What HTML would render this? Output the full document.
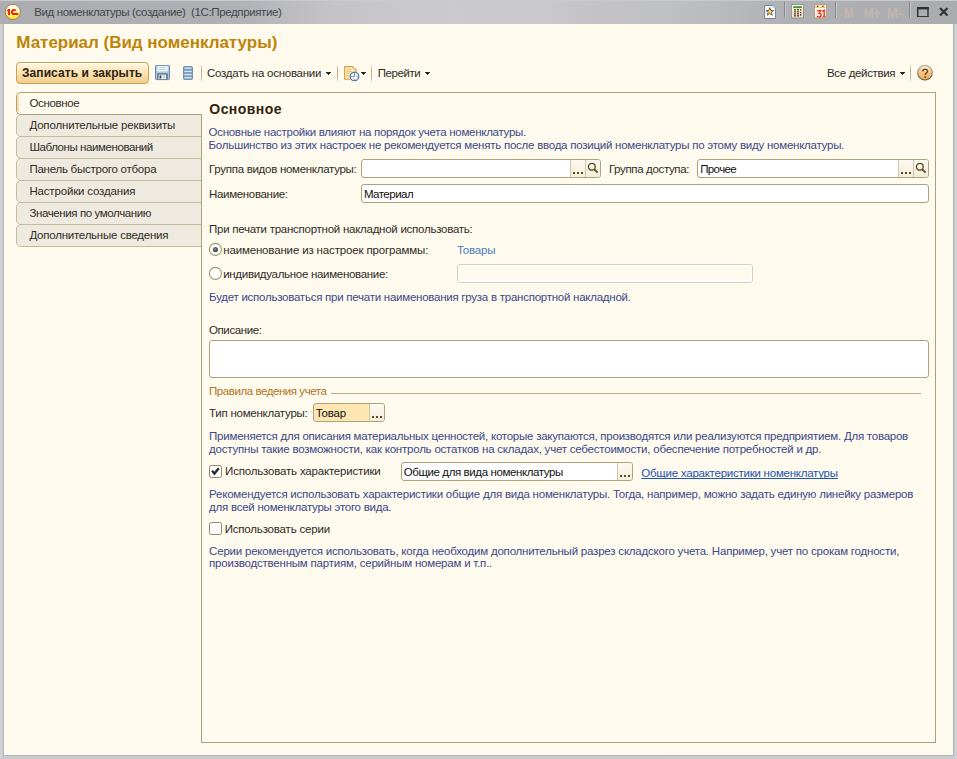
<!DOCTYPE html>
<html><head><meta charset="utf-8">
<style>
html,body{margin:0;padding:0;}
body{width:957px;height:759px;position:relative;overflow:hidden;background:#c9cbcf;font-family:"Liberation Sans",sans-serif;}
.a{position:absolute;box-sizing:border-box;}
.t{position:absolute;white-space:pre;font-family:"Liberation Sans",sans-serif;}
.sep{position:absolute;width:1px;background:linear-gradient(#fffaee,#bdb596 25%,#bdb596 75%,#fffaee);}
.tsep{position:absolute;width:2px;background:linear-gradient(90deg,#8e9095,#c9cbcf);}
.fld{position:absolute;box-sizing:border-box;border:1px solid #aca37c;border-radius:3px;background:#fff;}
.btn{position:absolute;box-sizing:border-box;background:linear-gradient(#fdf9f2,#f3edda);border-left:1px solid #cfc7a8;}
.dots{position:absolute;}
.dots i{position:absolute;width:2px;height:2px;background:#5c4a1c;top:0;}
.tab{position:absolute;box-sizing:border-box;left:16px;width:186px;height:23px;border:1px solid #c3bb9b;border-radius:5px 0 0 5px;background:#eeeadf;}
.arr{position:absolute;width:5px;height:3px;background:#2e2616;clip-path:polygon(0 0,100% 0,50% 100%);}
</style></head><body>
<!-- window frame -->
<div class="a" style="left:0;top:0;width:957px;height:759px;background:linear-gradient(90deg,#d3d4d8 0,#c8cacd 3px,#c9cbcf 954px,#d3d5d8 957px);"></div>
<!-- title bar -->
<div class="a" style="left:0;top:0;width:957px;height:24px;background:linear-gradient(90deg,#abadb1 0px,#adafb3 200px,#b2b3b7 250px,#bbbbc0 290px,#c5c5c9 340px,#cbcbcd 450px,#cacacc 530px,#c3c3c7 600px,#bfc0c4 670px,#b9babe 720px,#aeb0b4 790px,#a9abaf 957px);"></div>
<div class="a" style="left:0;top:0;width:957px;height:1px;background:#c7cace;"></div>
<!-- content -->
<div class="a" style="left:4px;top:24px;width:949px;height:731px;background:#fffaee;"></div>
<div class="a" style="left:3px;top:24px;width:1px;height:732px;background:#b3b5b9;"></div>
<div class="a" style="left:3px;top:755px;width:951px;height:1px;background:#b3b5b9;"></div>
<div class="a" style="left:953px;top:24px;width:1px;height:732px;background:#b3b5b9;"></div>

<!-- 1C logo -->
<svg class="a" style="left:4px;top:3px" width="18" height="18" viewBox="0 0 18 18">
<defs><linearGradient id="g1c" x1="0" y1="0" x2="0" y2="1"><stop offset="0" stop-color="#fffdf0"/><stop offset="0.35" stop-color="#fffbd8"/><stop offset="0.6" stop-color="#fff27a"/><stop offset="1" stop-color="#ffe41c"/></linearGradient></defs>
<circle cx="8.9" cy="8.9" r="7.6" fill="url(#g1c)" stroke="#a77a5c" stroke-width="1"/>
<path d="M2.9 7.3 L4.5 6 L6 6 L6 11.9 L4.2 11.9 L4.2 8 L3.4 8.4 Z" fill="#ee1208"/>
<path d="M11.6 7.65 A2.1 2.1 0 1 0 9.64 11.07" fill="none" stroke="#ee1208" stroke-width="1.8"/>
<rect x="8.8" y="10.1" width="5.5" height="1.8" fill="#ee1208"/>
</svg>

<!-- title right icons -->
<svg class="a" style="left:0;top:0" width="957" height="24" viewBox="0 0 957 24">
<defs>
<linearGradient id="gcalc" x1="0" y1="0" x2="0" y2="1"><stop offset="0" stop-color="#fffaf0"/><stop offset="1" stop-color="#f9d9a8"/></linearGradient>
<linearGradient id="gcal" x1="0" y1="0" x2="0" y2="1"><stop offset="0" stop-color="#fffdf8"/><stop offset="1" stop-color="#fbe6c6"/></linearGradient>
<linearGradient id="gcalh" x1="0" y1="0" x2="0" y2="1"><stop offset="0" stop-color="#fde6b0"/><stop offset="1" stop-color="#e9b868"/></linearGradient>
</defs>
<!-- star doc -->
<path d="M764.7 5.5 H773 L775.5 8 V18.5 H764.7 Z" fill="#fff" stroke="#6f87a3" stroke-width="1"/>
<path d="M773 5.5 V8 H775.5" fill="#dce6f0" stroke="#a9bbd0" stroke-width="0.7"/>
<path d="M769.8 7.6 L770.9 10.4 L773.6 10.5 L771.5 12.3 L772.3 15.2 L769.8 13.6 L767.3 15.2 L768.1 12.3 L766 10.5 L768.7 10.4 Z" fill="#f6cc66" stroke="#4a4030" stroke-width="0.8" stroke-linejoin="round"/>
<!-- separators -->
<rect x="784" y="1.5" width="1" height="16" fill="#85878b"/><rect x="785" y="1.5" width="1" height="16" fill="#c4c6ca"/>
<rect x="835" y="1.5" width="1" height="16" fill="#85878b"/><rect x="836" y="1.5" width="1" height="16" fill="#c4c6ca"/>
<rect x="909" y="1.5" width="1" height="16" fill="#85878b"/><rect x="910" y="1.5" width="1" height="16" fill="#c4c6ca"/>
<!-- calculator -->
<rect x="791.5" y="4.5" width="12" height="13.5" fill="url(#gcalc)" stroke="#8e98a2" stroke-width="1"/>
<rect x="793.2" y="6.2" width="8.8" height="1.9" fill="#3f9a25"/>
<g fill="#3a3a3a"><rect x="794" y="9.2" width="2" height="1.2"/><rect x="797" y="9.2" width="2" height="1.2"/><rect x="794" y="11.2" width="2" height="1.2"/><rect x="797" y="11.2" width="2" height="1.2"/><rect x="794" y="13.2" width="2" height="1.2"/><rect x="797" y="13.2" width="2" height="1.2"/><rect x="794" y="15.2" width="2" height="1.2"/><rect x="797" y="15.2" width="2" height="1.2"/><rect x="800" y="12" width="1.3" height="1.2"/><rect x="800" y="14" width="1.3" height="1.6"/></g>
<rect x="800" y="9" width="1.3" height="1.7" fill="#e82a1c"/>
<!-- calendar -->
<rect x="814.5" y="4.5" width="12" height="13.5" fill="url(#gcal)" stroke="#a8a49a" stroke-width="1"/>
<rect x="815" y="5" width="11" height="2.8" fill="url(#gcalh)"/>
<g fill="#5a3a1a"><rect x="817" y="5.8" width="1.2" height="1.2"/><rect x="822.3" y="5.8" width="1.2" height="1.2"/></g>
<g fill="#fff"><rect x="819.6" y="5.8" width="1.2" height="1.2"/><rect x="824.6" y="5.8" width="1.2" height="1.2"/></g>
<path d="M817.2 10.7 H820.7 L818.9 13.1 C820.4 13.1 821.2 13.8 821.2 15 C821.2 16.3 820.3 17 819 17 C818.1 17 817.4 16.6 817 16" fill="none" stroke="#ea2a1a" stroke-width="1.25"/><path d="M822.3 11.8 L824.2 10.2 V16.6" fill="none" stroke="#ea2a1a" stroke-width="1.3"/><rect x="822.3" y="16.3" width="3.4" height="1" fill="#ea2a1a"/>
<!-- M M+ M- -->
<g font-family="Liberation Sans" font-size="14.2" font-weight="700" fill="#c4b6ae">
<text x="843.8" y="17.6" textLength="10" lengthAdjust="spacingAndGlyphs">M</text>
<text x="863.8" y="17.6" textLength="16.4" lengthAdjust="spacingAndGlyphs">M+</text>
<text x="886.8" y="17.6" textLength="15.9" lengthAdjust="spacingAndGlyphs">M-</text>
</g>
<!-- maximize -->
<rect x="917.7" y="8" width="10.3" height="8.8" fill="none" stroke="#2e2e2e" stroke-width="1.4"/>
<rect x="917" y="7" width="11.7" height="2.4" fill="#2e2e2e"/>
<rect x="917" y="17.5" width="11.7" height="0.6" fill="#e6e7ea"/>
<!-- close -->
<path d="M940 8 L947.5 15.5 M947.5 8 L940 15.5" stroke="#333" stroke-width="2.2"/>
</svg>

<!-- toolbar -->
<div class="a" style="left:16px;top:62px;width:133px;height:22px;border:1px solid #cca153;border-radius:4px;background:linear-gradient(#fff7e4 0,#fce6bb 40%,#f6d8a0 75%,#f1cd8c 100%);box-shadow:inset 0 1px 0 #fffcf2;"></div>
<svg class="a" style="left:155px;top:65px" width="16" height="16" viewBox="0 0 16 16">
<rect x="0.5" y="0.4" width="14" height="14.2" rx="0.8" fill="#a8c8e6" stroke="#6d8aa6" stroke-width="1"/>
<rect x="2.5" y="1" width="10" height="5.3" fill="#fff"/>
<rect x="3.5" y="2.2" width="7.5" height="0.9" fill="#a4d0e2"/><rect x="3.5" y="4.1" width="7.5" height="0.9" fill="#a4d0e2"/>
<rect x="2.2" y="8.3" width="10.6" height="6" rx="0.6" fill="#5d7288"/>
<rect x="3.6" y="9.6" width="7.6" height="4.4" fill="#f2f2f4"/>
<rect x="4.6" y="10.4" width="1.8" height="3" fill="#2f4862"/>
<rect x="7.8" y="10.4" width="2.6" height="3" fill="#cfd2d6"/>
</svg>
<svg class="a" style="left:183px;top:66px" width="10" height="14" viewBox="0 0 10 14">
<defs><linearGradient id="gbar" x1="0" y1="0" x2="0" y2="1"><stop offset="0" stop-color="#b8d0e8"/><stop offset="0.5" stop-color="#deebf7"/><stop offset="1" stop-color="#aac4de"/></linearGradient></defs>
<rect x="0.4" y="0.4" width="9.2" height="13.2" rx="1.6" fill="#6a8fb2" stroke="#5d82a6" stroke-width="0.8"/>
<rect x="1.3" y="1.3" width="7.4" height="1.9" fill="url(#gbar)"/>
<rect x="1.3" y="4.5" width="7.4" height="1.9" fill="url(#gbar)"/>
<rect x="1.3" y="7.7" width="7.4" height="1.9" fill="url(#gbar)"/>
<rect x="1.3" y="10.8" width="7.4" height="1.9" fill="url(#gbar)"/>
</svg>
<div class="sep" style="left:201px;top:64px;height:19px;"></div>
<svg class="a" style="left:326px;top:72px" width="5" height="3" shape-rendering="crispEdges"><rect x="0" y="0" width="5" height="1" fill="#2e2616"/><rect x="1" y="1" width="3" height="1" fill="#2e2616"/><rect x="2" y="2" width="1" height="1" fill="#2e2616"/></svg>
<div class="sep" style="left:337px;top:64px;height:19px;"></div>
<svg class="a" style="left:338px;top:60px" width="24" height="24" viewBox="0 0 24 24">
<defs><linearGradient id="gdoc" x1="0" y1="0" x2="0" y2="1"><stop offset="0" stop-color="#fdf0c0"/><stop offset="1" stop-color="#f8e2a0"/></linearGradient>
<radialGradient id="gclk" cx="0.4" cy="0.4" r="0.7"><stop offset="0" stop-color="#ffffff"/><stop offset="0.7" stop-color="#dfeaf8"/><stop offset="1" stop-color="#a9c4e6"/></radialGradient></defs>
<path d="M6.6 6.6 H14.6 L18.2 10 V19.3 H6.6 Z" fill="url(#gdoc)" stroke="#cfa54c" stroke-width="1.1" stroke-linejoin="round"/>
<path d="M14.6 6.6 C14.8 8.4 15.6 9.4 18.2 10" fill="#fff6d8" stroke="#cfa54c" stroke-width="1"/>
<g stroke="#e2c070" stroke-width="0.9"><path d="M8.4 9.2 H13.4 M8.4 11.3 H14.2 M8.4 13.4 H11.4 M8.4 15.5 H10.6"/></g>
<circle cx="16.5" cy="16.5" r="4.3" fill="url(#gclk)" stroke="#3a76b6" stroke-width="1.1"/>
<g fill="#e23a2a"><rect x="16" y="12.6" width="1" height="1"/><rect x="16" y="19.4" width="1" height="1"/><rect x="12.6" y="16" width="1" height="1"/><rect x="19.4" y="16" width="1" height="1"/></g>
<path d="M16.5 13.8 V16.6 H14.2" fill="none" stroke="#2f5c9a" stroke-width="0.7"/>
</svg>
<svg class="a" style="left:361px;top:72px" width="5" height="3" shape-rendering="crispEdges"><rect x="0" y="0" width="5" height="1" fill="#2e2616"/><rect x="1" y="1" width="3" height="1" fill="#2e2616"/><rect x="2" y="2" width="1" height="1" fill="#2e2616"/></svg>
<div class="sep" style="left:371px;top:64px;height:19px;"></div>
<svg class="a" style="left:425px;top:72px" width="5" height="3" shape-rendering="crispEdges"><rect x="0" y="0" width="5" height="1" fill="#2e2616"/><rect x="1" y="1" width="3" height="1" fill="#2e2616"/><rect x="2" y="2" width="1" height="1" fill="#2e2616"/></svg>
<svg class="a" style="left:900px;top:72px" width="5" height="3" shape-rendering="crispEdges"><rect x="0" y="0" width="5" height="1" fill="#2e2616"/><rect x="1" y="1" width="3" height="1" fill="#2e2616"/><rect x="2" y="2" width="1" height="1" fill="#2e2616"/></svg>
<div class="sep" style="left:910px;top:64px;height:19px;"></div>
<svg class="a" style="left:916px;top:64px" width="18" height="18" viewBox="0 0 18 18">
<defs><linearGradient id="ghelp" x1="0" y1="0" x2="0" y2="1"><stop offset="0" stop-color="#fbe3bd"/><stop offset="0.45" stop-color="#f9c987"/><stop offset="1" stop-color="#f6a838"/></linearGradient>
<linearGradient id="ghelpb" x1="0" y1="0" x2="0" y2="1"><stop offset="0" stop-color="#b8b4a8"/><stop offset="1" stop-color="#4e5566"/></linearGradient>
<radialGradient id="ghl" cx="0.5" cy="0.5" r="0.5"><stop offset="0" stop-color="#fff" stop-opacity="0.95"/><stop offset="1" stop-color="#fff" stop-opacity="0"/></radialGradient></defs>
<circle cx="9" cy="8.7" r="7.3" fill="url(#ghelp)" stroke="url(#ghelpb)" stroke-width="1.1"/>
<ellipse cx="9" cy="5.2" rx="4.8" ry="3" fill="url(#ghl)"/>
<g transform="translate(0,0.8)"><path d="M6.6 6.6 C6.8 4.9 8 4.4 9.1 4.4 C10.5 4.4 11.5 5.3 11.5 6.4 C11.5 7.6 10.5 8 9.8 8.7 C9.4 9.1 9.3 9.6 9.3 10.3" fill="none" stroke="#6e4a26" stroke-width="1.5"/>
<rect x="8.4" y="11.6" width="1.8" height="1.6" fill="#6e4a26"/></g>
</svg>

<!-- tabs -->
<div class="tab" style="top:114px;"></div>
<div class="tab" style="top:136px;"></div>
<div class="tab" style="top:158px;"></div>
<div class="tab" style="top:180px;"></div>
<div class="tab" style="top:202px;"></div>
<div class="tab" style="top:224px;"></div>
<!-- main panel -->
<div class="a" style="left:201px;top:92px;width:735px;height:651px;border:1px solid #aaa27e;"></div>
<!-- active tab -->
<div class="a" style="left:16px;top:92px;width:186px;height:23px;border:1px solid #aaa27e;border-right:none;border-radius:5px 0 0 5px;background:#fffaee;"></div>
<div class="a" style="left:17px;top:95px;width:2px;height:17px;background:#fddca4;"></div>

<!-- fields row 1 -->
<div class="fld" style="left:361px;top:159px;width:240px;height:19px;"></div>
<div class="btn" style="left:570px;top:160px;width:15px;height:17px;"></div>
<div class="btn" style="left:585px;top:160px;width:15px;height:17px;border-radius:0 2px 2px 0;"></div>
<div class="dots" style="left:573px;top:172px;"><i style="left:0"></i><i style="left:4px"></i><i style="left:8px"></i></div>
<svg class="a" style="left:587px;top:162px" width="12" height="12" viewBox="0 0 12 12"><circle cx="4.8" cy="4.8" r="3.4" fill="none" stroke="#5a4a1c" stroke-width="1.3"/><path d="M7.3 7.3 L10.6 10.6" stroke="#5a4a1c" stroke-width="1.8"/></svg>

<div class="fld" style="left:697px;top:159px;width:232px;height:19px;"></div>
<div class="btn" style="left:898px;top:160px;width:15px;height:17px;"></div>
<div class="btn" style="left:913px;top:160px;width:15px;height:17px;border-radius:0 2px 2px 0;"></div>
<div class="dots" style="left:901px;top:172px;"><i style="left:0"></i><i style="left:4px"></i><i style="left:8px"></i></div>
<svg class="a" style="left:915px;top:162px" width="12" height="12" viewBox="0 0 12 12"><circle cx="4.8" cy="4.8" r="3.4" fill="none" stroke="#5a4a1c" stroke-width="1.3"/><path d="M7.3 7.3 L10.6 10.6" stroke="#5a4a1c" stroke-width="1.8"/></svg>

<div class="fld" style="left:361px;top:184px;width:568px;height:19px;"></div>

<!-- radios -->
<svg class="a" style="left:208px;top:242px" width="15" height="15" viewBox="0 0 15 15"><defs><radialGradient id="gdot" cx="0.4" cy="0.4" r="0.6"><stop offset="0" stop-color="#8a8a8a"/><stop offset="1" stop-color="#3a3a3a"/></radialGradient></defs><circle cx="7.4" cy="7.4" r="6" fill="#fff" stroke="#a0976f" stroke-width="1.1"/><circle cx="7.4" cy="7.5" r="2.6" fill="url(#gdot)"/></svg>
<svg class="a" style="left:208px;top:266px" width="15" height="15" viewBox="0 0 15 15"><circle cx="7.4" cy="7.4" r="6" fill="#fff" stroke="#a0976f" stroke-width="1.1"/></svg>
<div class="a" style="left:457px;top:264px;width:296px;height:19px;border:1px solid #d8d0bb;border-radius:3px;background:#fffaee;box-shadow:inset 0 0 0 2px #fff;"></div>

<!-- memo -->
<div class="fld" style="left:209px;top:340px;width:720px;height:38px;"></div>
<!-- group line -->
<div class="a" style="left:331px;top:393px;width:590px;height:1px;background:#b4ad8e;"></div>
<!-- type field -->
<div class="fld" style="left:313px;top:403px;width:72px;height:19px;background:#fde6b2;"></div>
<div class="btn" style="left:369px;top:404px;width:15px;height:17px;border-radius:0 2px 2px 0;"></div>
<div class="dots" style="left:372px;top:416px;"><i style="left:0"></i><i style="left:4px"></i><i style="left:8px"></i></div>

<!-- checkboxes -->
<svg class="a" style="left:209px;top:465px" width="13" height="13" viewBox="0 0 13 13"><rect x="0.5" y="0.5" width="12" height="12" rx="2" fill="#fff" stroke="#8f886a" stroke-width="1"/><path d="M3.1 5.6 L5.4 8.6 L9.8 3.3" fill="none" stroke="#262626" stroke-width="2.3" stroke-linejoin="miter"/></svg>
<div class="fld" style="left:401px;top:462px;width:232px;height:19px;"></div>
<div class="btn" style="left:617px;top:463px;width:15px;height:17px;border-radius:0 2px 2px 0;"></div>
<div class="dots" style="left:620px;top:475px;"><i style="left:0"></i><i style="left:4px"></i><i style="left:8px"></i></div>
<svg class="a" style="left:209px;top:522px" width="13" height="13" viewBox="0 0 13 13"><rect x="0.5" y="0.5" width="12" height="12" rx="2" fill="#fff" stroke="#8f886a" stroke-width="1"/></svg>

<div class="t gt" id=t0 style="left:34.20px;top:5.22px;font-size:11.5px;line-height:14px;font-weight:400;color:#45454c;letter-spacing:-0.376px;">Вид номенклатуры (создание)  (1С:Предприятие)</div>
<div class="t gt" id=t1 style="left:16.30px;top:32.91px;font-size:17px;line-height:20px;font-weight:700;color:#bd850a;letter-spacing:-0.021px;">Материал (Вид номенклатуры)</div>
<div class="t gt" id=t2 style="left:22.00px;top:66.44px;font-size:12px;line-height:14px;font-weight:700;color:#2e220e;letter-spacing:0.076px;">Записать и закрыть</div>
<div class="t gt" id=t3 style="left:207.00px;top:66.02px;font-size:11.5px;line-height:14px;font-weight:400;color:#2f2b26;letter-spacing:-0.256px;">Создать на основании</div>
<div class="t gt" id=t4 style="left:377.80px;top:66.02px;font-size:11.5px;line-height:14px;font-weight:400;color:#2f2b26;letter-spacing:-0.454px;">Перейти</div>
<div class="t gt" id=t5 style="left:827.00px;top:66.02px;font-size:11.5px;line-height:14px;font-weight:400;color:#2f2b26;letter-spacing:-0.344px;">Все действия</div>
<div class="t gt" id=t6 style="left:29.40px;top:96.12px;font-size:11.5px;line-height:14px;font-weight:400;color:#2f2b26;letter-spacing:-0.350px;">Основное</div>
<div class="t gt" id=t7 style="left:29.40px;top:118.12px;font-size:11.5px;line-height:14px;font-weight:400;color:#2f2b26;letter-spacing:-0.168px;">Дополнительные реквизиты</div>
<div class="t gt" id=t8 style="left:29.40px;top:140.12px;font-size:11.5px;line-height:14px;font-weight:400;color:#2f2b26;letter-spacing:-0.418px;">Шаблоны наименований</div>
<div class="t gt" id=t9 style="left:29.40px;top:162.12px;font-size:11.5px;line-height:14px;font-weight:400;color:#2f2b26;letter-spacing:-0.246px;">Панель быстрого отбора</div>
<div class="t gt" id=t10 style="left:29.40px;top:184.12px;font-size:11.5px;line-height:14px;font-weight:400;color:#2f2b26;letter-spacing:-0.170px;">Настройки создания</div>
<div class="t gt" id=t11 style="left:29.40px;top:206.12px;font-size:11.5px;line-height:14px;font-weight:400;color:#2f2b26;letter-spacing:-0.389px;">Значения по умолчанию</div>
<div class="t gt" id=t12 style="left:29.40px;top:228.12px;font-size:11.5px;line-height:14px;font-weight:400;color:#2f2b26;letter-spacing:-0.231px;">Дополнительные сведения</div>
<div class="t gt" id=t13 style="left:209.30px;top:101.15px;font-size:14px;line-height:17px;font-weight:700;color:#33240e;letter-spacing:0.451px;">Основное</div>
<div class="t gt" id=t14 style="left:208.50px;top:124.82px;font-size:11.5px;line-height:14px;font-weight:400;color:#3b4889;letter-spacing:-0.270px;">Основные настройки влияют на порядок учета номенклатуры.</div>
<div class="t gt" id=t15 style="left:208.50px;top:137.82px;font-size:11.5px;line-height:14px;font-weight:400;color:#3b4889;letter-spacing:-0.242px;">Большинство из этих настроек не рекомендуется менять после ввода позиций номенклатуры по этому виду номенклатуры.</div>
<div class="t gt" id=t16 style="left:209.00px;top:162.02px;font-size:11.5px;line-height:14px;font-weight:400;color:#2f2b26;letter-spacing:-0.284px;">Группа видов номенклатуры:</div>
<div class="t gt" id=t17 style="left:608.90px;top:162.02px;font-size:11.5px;line-height:14px;font-weight:400;color:#2f2b26;letter-spacing:-0.351px;">Группа доступа:</div>
<div class="t gt" id=t18 style="left:700.20px;top:162.02px;font-size:11.5px;line-height:14px;font-weight:400;color:#111;letter-spacing:-0.616px;">Прочее</div>
<div class="t gt" id=t19 style="left:209.00px;top:186.82px;font-size:11.5px;line-height:14px;font-weight:400;color:#2f2b26;letter-spacing:-0.325px;">Наименование:</div>
<div class="t gt" id=t20 style="left:363.90px;top:187.12px;font-size:11.5px;line-height:14px;font-weight:400;color:#111;letter-spacing:-0.502px;">Материал</div>
<div class="t gt" id=t21 style="left:209.00px;top:222.02px;font-size:11.5px;line-height:14px;font-weight:400;color:#2f2b26;letter-spacing:-0.257px;">При печати транспортной накладной использовать:</div>
<div class="t gt" id=t22 style="left:223.20px;top:242.82px;font-size:11.5px;line-height:14px;font-weight:400;color:#2f2b26;letter-spacing:-0.152px;">наименование из настроек программы:</div>
<div class="t gt" id=t23 style="left:456.90px;top:243.32px;font-size:11.5px;line-height:14px;font-weight:400;color:#4a7cc0;letter-spacing:-0.210px;">Товары</div>
<div class="t gt" id=t24 style="left:223.20px;top:266.82px;font-size:11.5px;line-height:14px;font-weight:400;color:#2f2b26;letter-spacing:-0.299px;">индивидуальное наименование:</div>
<div class="t gt" id=t25 style="left:209.10px;top:289.72px;font-size:11.5px;line-height:14px;font-weight:400;color:#3b4889;letter-spacing:-0.249px;">Будет использоваться при печати наименования груза в транспортной накладной.</div>
<div class="t gt" id=t26 style="left:209.00px;top:322.72px;font-size:11.5px;line-height:14px;font-weight:400;color:#2f2b26;letter-spacing:-0.401px;">Описание:</div>
<div class="t gt" id=t27 style="left:209.00px;top:383.92px;font-size:11.5px;line-height:14px;font-weight:400;color:#b0741e;letter-spacing:-0.434px;">Правила ведения учета</div>
<div class="t gt" id=t28 style="left:209.00px;top:406.32px;font-size:11.5px;line-height:14px;font-weight:400;color:#2f2b26;letter-spacing:-0.244px;">Тип номенклатуры:</div>
<div class="t gt" id=t29 style="left:315.70px;top:405.92px;font-size:11.5px;line-height:14px;font-weight:400;color:#111;letter-spacing:-0.199px;">Товар</div>
<div class="t gt" id=t30 style="left:209.10px;top:428.82px;font-size:11.5px;line-height:14px;font-weight:400;color:#3b4889;letter-spacing:-0.240px;">Применяется для описания материальных ценностей, которые закупаются, производятся или реализуются предприятием. Для товаров</div>
<div class="t gt" id=t31 style="left:209.10px;top:441.82px;font-size:11.5px;line-height:14px;font-weight:400;color:#3b4889;letter-spacing:-0.215px;">доступны такие возможности, как контроль остатков на складах, учет себестоимости, обеспечение потребностей и др.</div>
<div class="t gt" id=t32 style="left:225.10px;top:464.02px;font-size:11.5px;line-height:14px;font-weight:400;color:#2f2b26;letter-spacing:-0.186px;">Использовать характеристики</div>
<div class="t gt" id=t33 style="left:403.70px;top:464.62px;font-size:11.5px;line-height:14px;font-weight:400;color:#111;letter-spacing:-0.392px;">Общие для вида номенклатуры</div>
<div class="t gt" id=t34 style="left:641.30px;top:465.52px;font-size:11.5px;line-height:14px;font-weight:400;color:#2255b0;letter-spacing:-0.243px;text-decoration:underline;text-decoration-skip-ink:none;">Общие характеристики номенклатуры</div>
<div class="t gt" id=t35 style="left:209.10px;top:487.02px;font-size:11.5px;line-height:14px;font-weight:400;color:#3b4889;letter-spacing:-0.225px;">Рекомендуется использовать характеристики общие для вида номенклатуры. Тогда, например, можно задать единую линейку размеров</div>
<div class="t gt" id=t36 style="left:209.10px;top:500.02px;font-size:11.5px;line-height:14px;font-weight:400;color:#3b4889;letter-spacing:-0.248px;">для всей номенклатуры этого вида.</div>
<div class="t gt" id=t37 style="left:224.70px;top:521.72px;font-size:11.5px;line-height:14px;font-weight:400;color:#2f2b26;letter-spacing:-0.189px;">Использовать серии</div>
<div class="t gt" id=t38 style="left:209.10px;top:543.92px;font-size:11.5px;line-height:14px;font-weight:400;color:#3b4889;letter-spacing:-0.208px;">Серии рекомендуется использовать, когда необходим дополнительный разрез складского учета. Например, учет по срокам годности,</div>
<div class="t gt" id=t39 style="left:209.10px;top:556.32px;font-size:11.5px;line-height:14px;font-weight:400;color:#3b4889;letter-spacing:-0.209px;">производственным партиям, серийным номерам и т.п..</div>
</body></html>
